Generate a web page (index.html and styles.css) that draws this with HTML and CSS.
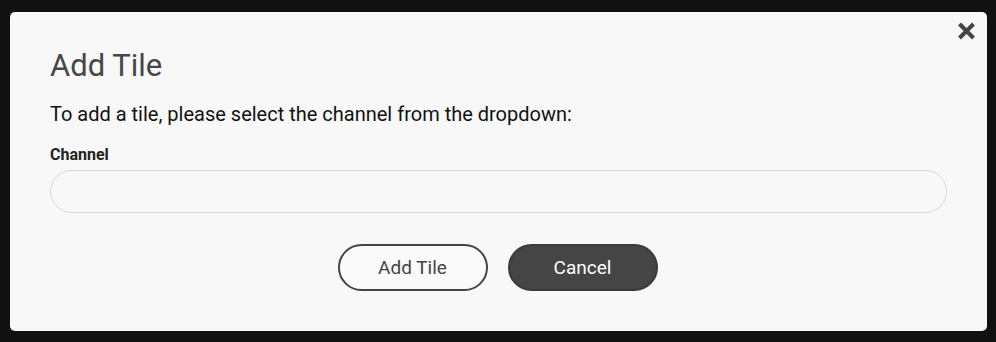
FILE: index.html
```html
<!DOCTYPE html>
<html>
<head>
<meta charset="utf-8">
<link rel="stylesheet" href="styles.css">
</head>
<body>
<div class="modal">
  <button class="close" aria-label="Close">
    <svg width="19" height="18" viewBox="0 0 19 18"><path d="M2.5 2 L16.5 16 M16.5 2 L2.5 16" stroke="#444" stroke-width="4" fill="none"/></svg>
  </button>
  <h1 class="title">Add Tile</h1>
  <p class="desc">To add a tile, please select the channel from the dropdown:</p>
  <label class="label">Channel</label>
  <div class="input"></div>
  <div class="actions">
    <button class="btn btn-outline">Add Tile</button>
    <button class="btn btn-dark">Cancel</button>
  </div>
</div>
</body>
</html>
```
FILE: styles.css
```css
html, body { margin: 0; padding: 0; }
body {
  background: #111111;
  font-family: Roboto, "Noto Sans", sans-serif;
  width: 996px;
  height: 342px;
  padding: 12px 9px 11px 10px;
  box-sizing: border-box;
}
.modal {
  position: relative;
  background: #f8f8f8;
  border-radius: 5px;
  height: 319px;
  padding: 36px 40px 0 40px;
  box-sizing: border-box;
}
.close {
  position: absolute;
  top: 10px;
  right: 11px;
  border: 0;
  background: none;
  padding: 0;
  width: 19px;
  height: 18px;
}
.close svg { display: block; }
.title {
  margin: 0;
  font-size: 31px;
  font-weight: 400;
  line-height: 36px;
  color: #474747;
}
.desc {
  margin: 18px 0 0 0;
  font-size: 20px;
  line-height: 24px;
  color: #111;
}
.label {
  display: block;
  margin-top: 19px;
  font-size: 16px;
  font-weight: 700;
  line-height: 20px;
  color: #222;
}
.input {
  margin-top: 5px;
  height: 43px;
  border: 1px solid #d3d6dc;
  border-radius: 22px;
  box-sizing: border-box;
  background: #f8f8f8;
}
.actions {
  display: flex;
  justify-content: center;
  gap: 20px;
  margin-top: 31px;
  padding-right: 2px;
}
.btn {
  width: 150px;
  height: 47px;
  border-radius: 24px;
  font-family: Roboto, sans-serif;
  font-size: 19px;
  box-sizing: border-box;
  border: 2px solid #444;
}
.btn-outline {
  background: #fafafa;
  color: #444;
}
.btn-dark {
  background: #454545;
  color: #fff;
  border-color: #3a3a3a;
}
```
